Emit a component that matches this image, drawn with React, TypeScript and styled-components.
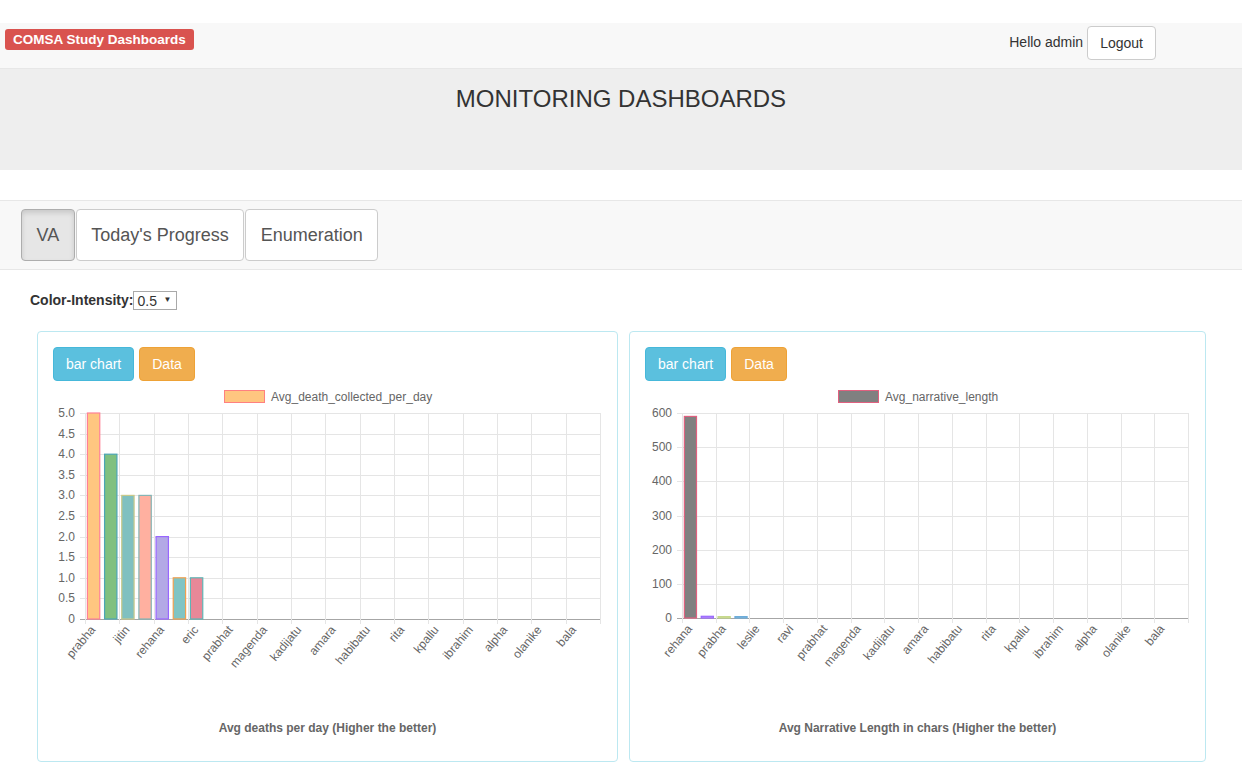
import React from 'react';
import styled, { createGlobalStyle, css } from 'styled-components';

const GlobalStyle = createGlobalStyle`
  html, body { margin: 0; padding: 0; background: #fff; }
  body {
    font-family: "Liberation Sans", Arial, Helvetica, sans-serif;
    font-size: 14px;
    line-height: 1.42857;
    color: #333;
  }
  * { box-sizing: border-box; }
`;

const Navbar = styled.nav`
  margin-top: 23px;
  height: 46px;
  background: #f8f8f8;
  border-bottom: 1px solid #e7e7e7;
  display: flex;
  justify-content: space-between;
  align-items: flex-start;
  padding: 0 86px 0 5px;
`;

const Brand = styled.span`
  margin-top: 6px;
  display: inline-block;
  background: #d9534f;
  color: #fff;
  font-weight: bold;
  font-size: 13.5px;
  line-height: 17px;
  padding: 2px 8px;
  border-radius: 3px;
`;

const UserBox = styled.div`
  margin-top: 3px;
  display: flex;
  align-items: center;
  gap: 4px;
`;

const Hello = styled.span`
  font-size: 14px;
  color: #333;
`;

const Button = styled.button<{ $variant?: 'default' | 'info' | 'warning' }>`
  font-family: inherit;
  font-size: 14px;
  line-height: 20px;
  padding: 6px 12px;
  border-radius: 4px;
  border: 1px solid #ccc;
  background: #fff;
  color: #333;
  cursor: pointer;
  ${(p) =>
    p.$variant === 'info' &&
    css`
      background: #5bc0de;
      border-color: #46b8da;
      color: #fff;
    `}
  ${(p) =>
    p.$variant === 'warning' &&
    css`
      background: #f0ad4e;
      border-color: #eea236;
      color: #fff;
    `}
`;

const Jumbotron = styled.header`
  height: 101px;
  background: #eee;
  padding-top: 17px;
  text-align: center;
`;

const Title = styled.h2`
  margin: 0;
  font-size: 24px;
  font-weight: normal;
  line-height: 26px;
  color: #333;
`;

const TabBar = styled.div`
  margin-top: 30px;
  background: #f8f8f8;
  border-top: 1px solid #e7e7e7;
  border-bottom: 1px solid #e7e7e7;
  padding: 8px 21px;
  display: flex;
  gap: 1px;
`;

const Tab = styled.button<{ $active?: boolean }>`
  font-family: inherit;
  height: 52px;
  padding: 0 14.5px;
  font-size: 18px;
  color: #555;
  background: #fff;
  border: 1px solid #ccc;
  border-radius: 4px;
  cursor: pointer;
  ${(p) =>
    p.$active &&
    css`
      background: #e6e6e6;
      border-color: #adadad;
      box-shadow: inset 0 3px 5px rgba(0, 0, 0, 0.125);
    `}
`;

const ControlRow = styled.div`
  margin-top: 21px;
  padding-left: 30px;
  display: flex;
  align-items: center;
  height: 19px;
`;

const ControlLabel = styled.label`
  font-weight: bold;
  font-size: 14px;
  color: #333;
`;

const SelectWrap = styled.span`
  position: relative;
  display: inline-block;
  height: 19px;
`;

const Select = styled.select`
  appearance: none;
  -webkit-appearance: none;
  font-family: inherit;
  font-size: 14px;
  height: 19px;
  width: 44px;
  padding: 0 0 0 3px;
  border: 1px solid #a9a9a9;
  border-radius: 0;
  background: #fff;
  color: #333;
  display: block;
`;

const SelectArrow = styled.span`
  position: absolute;
  right: 6px;
  top: 4px;
  font-size: 8px;
  line-height: 10px;
  color: #333;
  pointer-events: none;
`;

const Panels = styled.div`
  margin: 21px 36px 0 37px;
  display: grid;
  grid-template-columns: 1fr 1fr;
  gap: 11px;
`;

const Panel = styled.section`
  border: 1px solid #bce8f1;
  border-radius: 4px;
  padding: 15px 15px 24px;
  display: flex;
  flex-direction: column;
`;

const ButtonRow = styled.div`
  display: flex;
  gap: 5px;
`;

const ChartSvg = styled.svg`
  display: block;
  margin-top: 3px;
  font-family: "Liberation Sans", Arial, Helvetica, sans-serif;
`;

const Caption = styled.div`
  margin-top: 6px;
  text-align: center;
  font-weight: bold;
  font-size: 12px;
  line-height: 17px;
  color: #666;
`;

type BarDatum = { value: number; fill: string; stroke: string };

interface ChartProps {
  width: number;
  height: number;
  left: number;
  right: number;
  top: number;
  bottom: number;
  max: number;
  ticks: { v: number; label: string }[];
  labels: string[];
  bars: BarDatum[];
  legend: { x: number; label: string; fill: string; stroke: string };
}

const BarChart: React.FC<ChartProps> = ({
  width,
  height,
  left,
  right,
  top,
  bottom,
  max,
  ticks,
  labels,
  bars,
  legend,
}) => {
  const n = labels.length;
  const cw = (right - left) / n;
  const bw = cw * 0.72;
  const y = (v: number) => bottom - (v / max) * (bottom - top);
  const grid = '#e5e5e5';
  return (
    <ChartSvg width={width} height={height} viewBox={`0 0 ${width} ${height}`}>
      <rect x={legend.x + 0.5} y={6.5} width={40} height={12} fill={legend.fill} stroke={legend.stroke} strokeWidth={1} />
      <text x={legend.x + 47} y={16.5} fontSize={12} fill="#666">
        {legend.label}
      </text>
      {ticks.map((t) => (
        <g key={t.label}>
          <line
            x1={left - 5}
            x2={right}
            y1={Math.round(y(t.v)) + 0.5}
            y2={Math.round(y(t.v)) + 0.5}
            stroke={t.v === 0 ? '#a6a6a6' : grid}
            strokeWidth={1}
          />
          <text x={left - 10} y={y(t.v) + 4} fontSize={12} fill="#666" textAnchor="end">
            {t.label}
          </text>
        </g>
      ))}
      {Array.from({ length: n / 2 + 1 }).map((_, k) => {
        const x = Math.round(left + k * cw * 2) + 0.5;
        return <line key={k} x1={x} x2={x} y1={top} y2={bottom + 5} stroke={grid} strokeWidth={1} />;
      })}
      {bars.map((b, i) => {
        const cx = left + cw * (i + 0.5);
        const h = (b.value / max) * (bottom - top);
        return (
          <rect
            key={i}
            x={cx - bw / 2}
            y={bottom - h}
            width={bw}
            height={h}
            fill={b.fill}
            stroke={b.stroke}
            strokeWidth={1.2}
          />
        );
      })}
      {labels.map((l, i) =>
        i % 2 === 0 ? (
          <text
            key={i}
            transform={`translate(${left + cw * (i + 0.5)}, ${bottom + 9}) rotate(-50)`}
            fontSize={12}
            fill="#666"
            textAnchor="end"
            dominantBaseline="middle"
          >
            {l}
          </text>
        ) : null
      )}
    </ChartSvg>
  );
};

const labels1 = [
  'prabha', 'leslie', 'jitin', 'ravi', 'rehana', 'sita', 'eric', 'john',
  'prabhat', 'mary', 'magenda', 'musa', 'kadijatu', 'fatu', 'amara', 'sahr',
  'habibatu', 'kumba', 'rita', 'isatu', 'kpallu', 'tamba', 'ibrahim', 'aminata',
  'alpha', 'mohamed', 'olanike', 'adama', 'bala', 'sorie',
];

const labels2 = [
  'rehana', 'jitin', 'prabha', 'eric', 'leslie', 'sita', 'ravi', 'john',
  'prabhat', 'mary', 'magenda', 'musa', 'kadijatu', 'fatu', 'amara', 'sahr',
  'habibatu', 'kumba', 'rita', 'isatu', 'kpallu', 'tamba', 'ibrahim', 'aminata',
  'alpha', 'mohamed', 'olanike', 'adama', 'bala', 'sorie',
];

const bars1: BarDatum[] = [
  { value: 5, fill: '#ffc680', stroke: '#ff8095' },
  { value: 4, fill: '#80c080', stroke: '#4ba5b5' },
  { value: 3, fill: '#80c0c0', stroke: '#c9c98a' },
  { value: 3, fill: '#ffb0a0', stroke: '#85b5b5' },
  { value: 2, fill: '#b3a8e6', stroke: '#9966ff' },
  { value: 1, fill: '#80c4c4', stroke: '#f0a050' },
  { value: 1, fill: '#e88898', stroke: '#5fb5b5' },
];

const bars2: BarDatum[] = [
  { value: 590, fill: '#808080', stroke: '#e0607f' },
  { value: 5, fill: '#c8a0f5', stroke: '#9966ff' },
  { value: 4, fill: '#dde8a8', stroke: '#c5d88a' },
  { value: 4, fill: '#a8cce4', stroke: '#6aaad8' },
];

const ticks1 = Array.from({ length: 11 }).map((_, i) => ({
  v: i * 0.5,
  label: i === 0 ? '0' : (i * 0.5).toFixed(1),
}));

const ticks2 = Array.from({ length: 7 }).map((_, i) => ({ v: i * 100, label: String(i * 100) }));

export default function App() {
  return (
    <>
      <GlobalStyle />
      <Navbar>
        <Brand>COMSA Study Dashboards</Brand>
        <UserBox>
          <Hello>Hello admin</Hello>
          <Button>Logout</Button>
        </UserBox>
      </Navbar>
      <Jumbotron>
        <Title>MONITORING DASHBOARDS</Title>
      </Jumbotron>
      <TabBar>
        <Tab $active>VA</Tab>
        <Tab>Today's Progress</Tab>
        <Tab>Enumeration</Tab>
      </TabBar>
      <ControlRow>
        <ControlLabel htmlFor="ci">Color-Intensity:</ControlLabel>
        <SelectWrap>
          <Select id="ci" defaultValue="0.5">
            <option>0.1</option>
            <option>0.3</option>
            <option>0.5</option>
            <option>0.7</option>
            <option>1</option>
          </Select>
          <SelectArrow>▼</SelectArrow>
        </SelectWrap>
      </ControlRow>
      <Panels>
        <Panel>
          <ButtonRow>
            <Button $variant="info">bar chart</Button>
            <Button $variant="warning">Data</Button>
          </ButtonRow>
          <BarChart
            width={549}
            height={330}
            left={32}
            right={547}
            top={29}
            bottom={235}
            max={5}
            ticks={ticks1}
            labels={labels1}
            bars={bars1}
            legend={{ x: 171, label: 'Avg_death_collected_per_day', fill: '#ffc680', stroke: '#ff8080' }}
          />
          <Caption>Avg deaths per day (Higher the better)</Caption>
        </Panel>
        <Panel>
          <ButtonRow>
            <Button $variant="info">bar chart</Button>
            <Button $variant="warning">Data</Button>
          </ButtonRow>
          <BarChart
            width={545}
            height={330}
            left={37}
            right={543}
            top={29}
            bottom={234}
            max={600}
            ticks={ticks2}
            labels={labels2}
            bars={bars2}
            legend={{ x: 193, label: 'Avg_narrative_length', fill: '#808080', stroke: '#e0607f' }}
          />
          <Caption>Avg Narrative Length in chars (Higher the better)</Caption>
        </Panel>
      </Panels>
    </>
  );
}
